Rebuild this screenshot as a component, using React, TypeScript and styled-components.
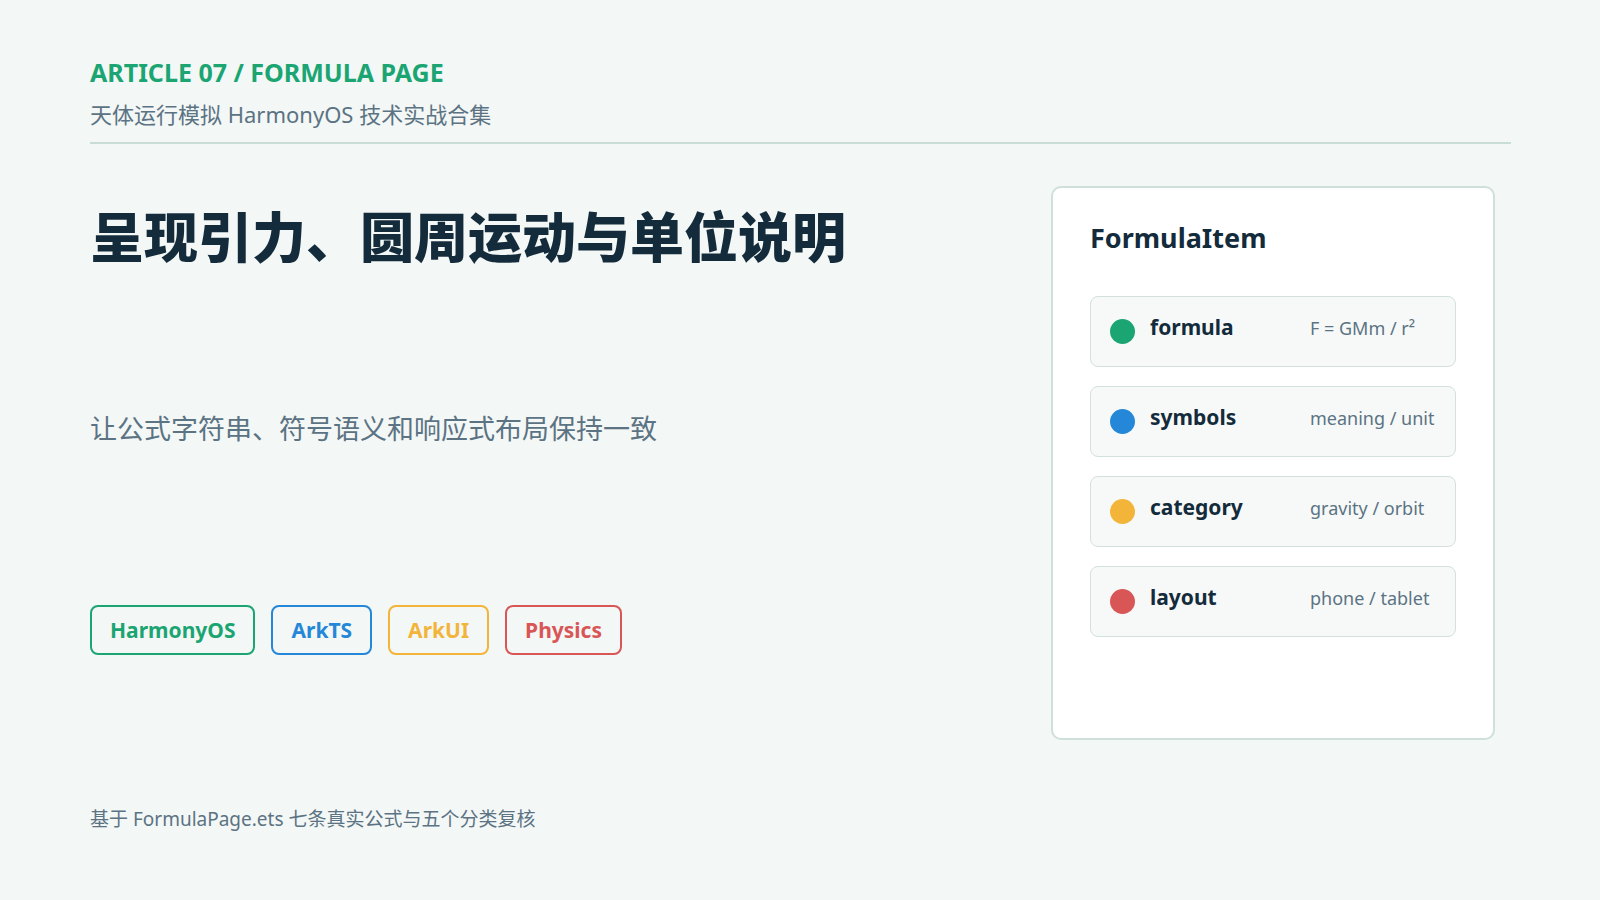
import React from "react";
import styled, { createGlobalStyle } from "styled-components";

const GlobalStyle = createGlobalStyle`
  * { box-sizing: border-box; }
  html, body { margin: 0; padding: 0; background: #f3f7f6; }
  body {
    font-family: "Noto Sans", "Noto Sans CJK SC", sans-serif;
    color: #132b3a;
  }
`;

const Page = styled.div`
  width: 1600px;
  height: 900px;
  padding: 56px 89px 0 90px;
  display: flex;
  flex-direction: column;
`;

const Header = styled.header`
  border-bottom: 2px solid #c9ddd7;
  padding-bottom: 13px;
`;

const Eyebrow = styled.div`
  color: #1aa572;
  font-size: 25px;
  font-weight: 700;
  line-height: 32px;
`;

const Subtitle = styled.div`
  margin-top: 11px;
  color: #5b7383;
  font-size: 22px;
  line-height: 30px;
`;

const Main = styled.main`
  display: flex;
  justify-content: space-between;
  align-items: flex-start;
`;

const Left = styled.section`
  display: flex;
  flex-direction: column;
`;

const Title = styled.h1`
  margin: 59px 0 0;
  font-size: 54px;
  line-height: 64px;
  font-weight: 900;
  color: #132b3a;
  font-family: "Noto Sans CJK SC", sans-serif;
`;

const Lead = styled.p`
  margin: 143px 0 0;
  font-size: 27px;
  line-height: 38px;
  color: #5b7383;
`;

const Tags = styled.div`
  margin-top: 157px;
  display: flex;
  gap: 16px;
`;

const Tag = styled.span<{ $color: string }>`
  height: 50px;
  padding: 0 18px;
  display: inline-flex;
  align-items: center;
  border: 2px solid ${(p) => p.$color};
  border-radius: 8px;
  color: ${(p) => p.$color};
  font-size: 21px;
  font-weight: 700;
`;

const Card = styled.aside`
  margin-top: 42px;
  margin-right: 16px;
  width: 444px;
  height: 554px;
  background: #ffffff;
  border: 2px solid #cfe0dc;
  border-radius: 10px;
  padding: 32px 37px;
`;

const CardTitle = styled.h2`
  margin: 0;
  font-size: 27px;
  line-height: 36px;
  font-weight: 700;
  color: #132b3a;
`;

const ItemList = styled.ul`
  list-style: none;
  margin: 40px 0 0;
  padding: 0;
  display: flex;
  flex-direction: column;
  gap: 19px;
`;

const Item = styled.li`
  height: 71px;
  display: flex;
  align-items: center;
  padding-left: 19px;
  background: #f7f9f9;
  border: 1.5px solid #d3e0dd;
  border-radius: 8px;
`;

const Dot = styled.span<{ $color: string }>`
  width: 25px;
  height: 25px;
  border-radius: 50%;
  background: ${(p) => p.$color};
  flex-shrink: 0;
`;

const Name = styled.span`
  width: 160px;
  margin-left: 15px;
  padding-bottom: 10px;
  font-size: 21px;
  font-weight: 700;
  color: #132b3a;
`;

const Value = styled.span`
  padding-bottom: 8px;
  font-size: 18px;
  color: #5b7383;
  white-space: nowrap;
`;

const Footer = styled.footer`
  margin-top: 66px;
  font-size: 19px;
  line-height: 26px;
  color: #5b7383;
`;

const tags = [
  { label: "HarmonyOS", color: "#1aa572" },
  { label: "ArkTS", color: "#2487d8" },
  { label: "ArkUI", color: "#f2b53a" },
  { label: "Physics", color: "#d95656" },
];

const items = [
  { name: "formula", value: "F = GMm / r²", color: "#1aa572" },
  { name: "symbols", value: "meaning / unit", color: "#2487d8" },
  { name: "category", value: "gravity / orbit", color: "#f2b53a" },
  { name: "layout", value: "phone / tablet", color: "#d95656" },
];

const App = () => {
  return (
    <>
      <GlobalStyle />
      <Page>
        <Header>
          <Eyebrow>ARTICLE 07 / FORMULA PAGE</Eyebrow>
          <Subtitle>天体运行模拟 HarmonyOS 技术实战合集</Subtitle>
        </Header>
        <Main>
          <Left>
            <Title>呈现引力、圆周运动与单位说明</Title>
            <Lead>让公式字符串、符号语义和响应式布局保持一致</Lead>
            <Tags>
              {tags.map((t) => (
                <Tag key={t.label} $color={t.color}>
                  {t.label}
                </Tag>
              ))}
            </Tags>
          </Left>
          <Card>
            <CardTitle>FormulaItem</CardTitle>
            <ItemList>
              {items.map((it) => (
                <Item key={it.name}>
                  <Dot $color={it.color} />
                  <Name>{it.name}</Name>
                  <Value>{it.value}</Value>
                </Item>
              ))}
            </ItemList>
          </Card>
        </Main>
        <Footer>基于 FormulaPage.ets 七条真实公式与五个分类复核</Footer>
      </Page>
    </>
  );
};

export default App;
